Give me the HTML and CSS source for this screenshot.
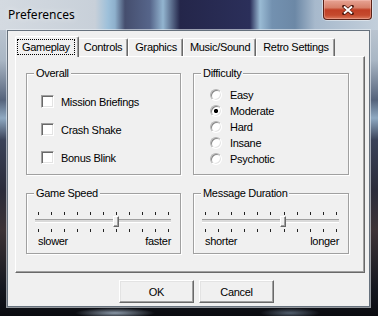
FILE: index.html
```html
<!DOCTYPE html>
<html lang="en">
<head>
    <meta charset="UTF-8">
    <title>Preferences</title>
    <link rel="stylesheet" href="styles.css">
</head>
<body>
    <div class="window">
        <div class="titlebar">
            <span class="title">Preferences</span>
            <button class="close-btn" title="Close">
                <svg width="12" height="10" viewBox="0 0 12 10">
                    <path d="M2 1.5 L10 8.5 M10 1.5 L2 8.5" stroke="#4a150c" stroke-width="3.6" stroke-linecap="round"/>
                    <path d="M2 1.5 L10 8.5 M10 1.5 L2 8.5" stroke="#fff" stroke-width="2"/>
                </svg>
            </button>
        </div>
        <div class="client">
            <div class="tabs">
                <div class="tab active"><span class="focus">Gameplay</span></div>
                <div class="tab">Controls</div>
                <div class="tab">Graphics</div>
                <div class="tab">Music/Sound</div>
                <div class="tab">Retro Settings</div>
            </div>
            <div class="panel">
                <fieldset class="group">
                    <legend>Overall</legend>
                    <div class="checks">
                        <label class="row"><input type="checkbox"> Mission Briefings</label>
                        <label class="row"><input type="checkbox"> Crash Shake</label>
                        <label class="row"><input type="checkbox"> Bonus Blink</label>
                    </div>
                </fieldset>
                <fieldset class="group">
                    <legend>Difficulty</legend>
                    <div class="radios">
                        <label class="row"><input type="radio" name="difficulty"> Easy</label>
                        <label class="row"><input type="radio" name="difficulty" checked> Moderate</label>
                        <label class="row"><input type="radio" name="difficulty"> Hard</label>
                        <label class="row"><input type="radio" name="difficulty"> Insane</label>
                        <label class="row"><input type="radio" name="difficulty"> Psychotic</label>
                    </div>
                </fieldset>
                <fieldset class="group">
                    <legend>Game Speed</legend>
                    <div class="slider">
                        <div class="ticks"><i></i><i></i><i></i><i></i><i></i><i></i><i></i><i></i><i></i><i></i><i></i></div>
                        <div class="track"><span class="thumb" style="left: 78px"></span></div>
                        <div class="ticks"><i></i><i></i><i></i><i></i><i></i><i></i><i></i><i></i><i></i><i></i><i></i></div>
                        <div class="slider-labels"><span>slower</span><span>faster</span></div>
                    </div>
                </fieldset>
                <fieldset class="group">
                    <legend>Message Duration</legend>
                    <div class="slider">
                        <div class="ticks"><i></i><i></i><i></i><i></i><i></i><i></i><i></i><i></i><i></i><i></i><i></i></div>
                        <div class="track"><span class="thumb" style="left: 78px"></span></div>
                        <div class="ticks"><i></i><i></i><i></i><i></i><i></i><i></i><i></i><i></i><i></i><i></i><i></i></div>
                        <div class="slider-labels"><span>shorter</span><span>longer</span></div>
                    </div>
                </fieldset>
            </div>
            <div class="buttons">
                <button class="btn">OK</button>
                <button class="btn">Cancel</button>
            </div>
        </div>
    </div>
</body>
</html>
```

FILE: styles.css
```css
* {
    box-sizing: border-box;
}
body {
    margin: 0;
    background-color: #10131c;
    font-family: "Liberation Sans", Arial, sans-serif;
    font-size: 11px;
    letter-spacing: -0.3px;
    color: #000;
}
.window {
    width: 378px;
    height: 316px;
    display: flex;
    flex-direction: column;
    background:
        radial-gradient(ellipse 40px 5px at 115px 313px, rgba(190, 210, 230, 0.7), transparent),
        radial-gradient(ellipse 30px 5px at 290px 313px, rgba(150, 175, 200, 0.5), transparent),
        linear-gradient(180deg, #c9d1da 0, #aab7c5 60px, #55637b 100px, #8fa9c2 118px, #3a4258 140px, #2b2c3a 190px, #3d3336 230px, #14161e 290px, #0a0b10 316px);
}
.titlebar {
    height: 30px;
    display: flex;
    justify-content: space-between;
    align-items: flex-start;
    padding-left: 8px;
    background: linear-gradient(90deg, #d4dae1 0, #c8d0d9 95px, #9dc0da 108px, #8eb0cc 115px, #454e6e 125px, #56658a 150px, #93b5d0 163px, #24264a 180px, #2b2f5a 250px, #9abbd4 260px, #7391b0 272px, #6c88a6 295px, #a7b9cc 315px, #c3cfdb 378px);
}
.title {
    font-family: "Noto Sans", "Open Sans", sans-serif;
    font-size: 12px;
    letter-spacing: 0;
    line-height: 30px;
    color: #000;
    text-shadow: 0 0 6px rgba(255, 255, 255, 0.8);
}
.close-btn {
    width: 49px;
    height: 20px;
    margin-right: 6px;
    padding: 0;
    display: flex;
    align-items: center;
    justify-content: center;
    border: 1px solid #5b2117;
    border-top: none;
    border-radius: 0 0 4px 4px;
    background: linear-gradient(180deg, #e7a495 0, #d7806a 40%, #c13f25 52%, #c54a2e 80%, #dc7a5d 100%);
    box-shadow: 0 0 0 1px rgba(255, 255, 255, 0.45), inset 0 0 0 1px rgba(255, 210, 200, 0.35);
}
.client {
    flex: 1;
    margin: 0 8px 9px 7px;
    padding: 5px 0 0 7px;
    background-color: #f0f0f0;
    border: 1px solid #66717d;
    box-shadow: 0 0 0 1px rgba(235, 240, 245, 0.6);
}
.tabs {
    display: flex;
    align-items: flex-end;
    height: 20px;
    padding-left: 2px;
}
.tab {
    position: relative;
    height: 18px;
    padding: 0 5px 0 6px;
    line-height: 16px;
    border: 1px solid #fff;
    border-right-color: #696969;
    border-bottom: none;
    border-radius: 2px 2px 0 0;
    box-shadow: inset -1px 0 0 #a0a0a0;
    white-space: nowrap;
}
.tab.active {
    z-index: 1;
    height: 21px;
    margin: 0 -2px -1px;
    padding: 2px 3px 0 1px;
    background-color: #f0f0f0;
}
.focus {
    display: block;
    padding: 0 4px;
    line-height: 14px;
    border: 1px dotted #000;
}
.panel {
    width: 350px;
    height: 217px;
    display: grid;
    grid-template-columns: 155px 156px;
    grid-template-rows: 108px 67px;
    gap: 12px;
    padding: 10px 15px 18px 10px;
    border: 1px solid #fff;
    border-right-color: #696969;
    border-bottom-color: #696969;
    box-shadow: inset -1px -1px 0 #a0a0a0;
}
.group {
    margin: 0;
    padding: 0;
    min-width: 0;
    border: 1px solid #a0a0a0;
    box-shadow: inset 1px 1px 0 #fff, 1px 1px 0 #fff;
}
.group legend {
    margin-left: 7px;
    padding: 0 2px;
    line-height: 13px;
    background-color: #f0f0f0;
}
.row {
    display: flex;
    align-items: center;
    white-space: nowrap;
}
.checks {
    display: flex;
    flex-direction: column;
    gap: 15px;
    padding: 15px 0 0 14px;
}
.checks .row {
    height: 13px;
    gap: 7px;
}
.radios {
    display: flex;
    flex-direction: column;
    padding: 7px 0 0 16px;
}
.radios .row {
    height: 16px;
    gap: 8px;
}
input[type="checkbox"],
input[type="radio"] {
    appearance: none;
    margin: 0;
    flex: none;
    background-color: #fff;
    border: 1px solid;
    border-color: #a0a0a0 #fff #fff #a0a0a0;
    box-shadow: inset 1px 1px 0 #696969, inset -1px -1px 0 #e3e3e3;
}
input[type="checkbox"] {
    width: 13px;
    height: 13px;
}
input[type="radio"] {
    width: 12px;
    height: 12px;
    border-radius: 50%;
    border-color: #b4b4b4 #fff #fff #b4b4b4;
    box-shadow: inset 1px 1px 0 #888, inset -1px -1px 0 #e3e3e3;
}
input[type="radio"]:checked {
    background: radial-gradient(circle, #000 0, #000 1.8px, #fff 2.4px);
}
.slider {
    padding: 12px 9px 0 8px;
}
.ticks {
    display: flex;
    justify-content: space-between;
    height: 3px;
    margin: 0 2px 0 3px;
}
.ticks i {
    width: 1px;
    background-color: #222;
}
.track {
    position: relative;
    height: 4px;
    margin: 4px 0 6px;
    background-color: #dadada;
    border-top: 1px solid #a0a0a0;
    border-bottom: 1px solid #fff;
}
.thumb {
    position: absolute;
    top: -4px;
    width: 6px;
    height: 11px;
    background-color: #f0f0f0;
    border: 1px solid;
    border-color: #fff #696969 #696969 #fff;
    box-shadow: inset -1px -1px 0 #a0a0a0;
}
.slider-labels {
    display: flex;
    justify-content: space-between;
    margin-top: 3px;
    padding-left: 3px;
    line-height: 13px;
}
.buttons {
    display: flex;
    gap: 5px;
    margin-top: 7px;
    padding-left: 104px;
}
.btn {
    width: 75px;
    height: 23px;
    padding: 0;
    font-family: "Liberation Sans", Arial, sans-serif;
    font-size: 11px;
    letter-spacing: -0.3px;
    color: #000;
    background-color: #f0f0f0;
    border: 1px solid;
    border-color: #fff #696969 #696969 #fff;
    box-shadow: inset -1px -1px 0 #a0a0a0, inset 1px 1px 0 #e3e3e3;
}
```
